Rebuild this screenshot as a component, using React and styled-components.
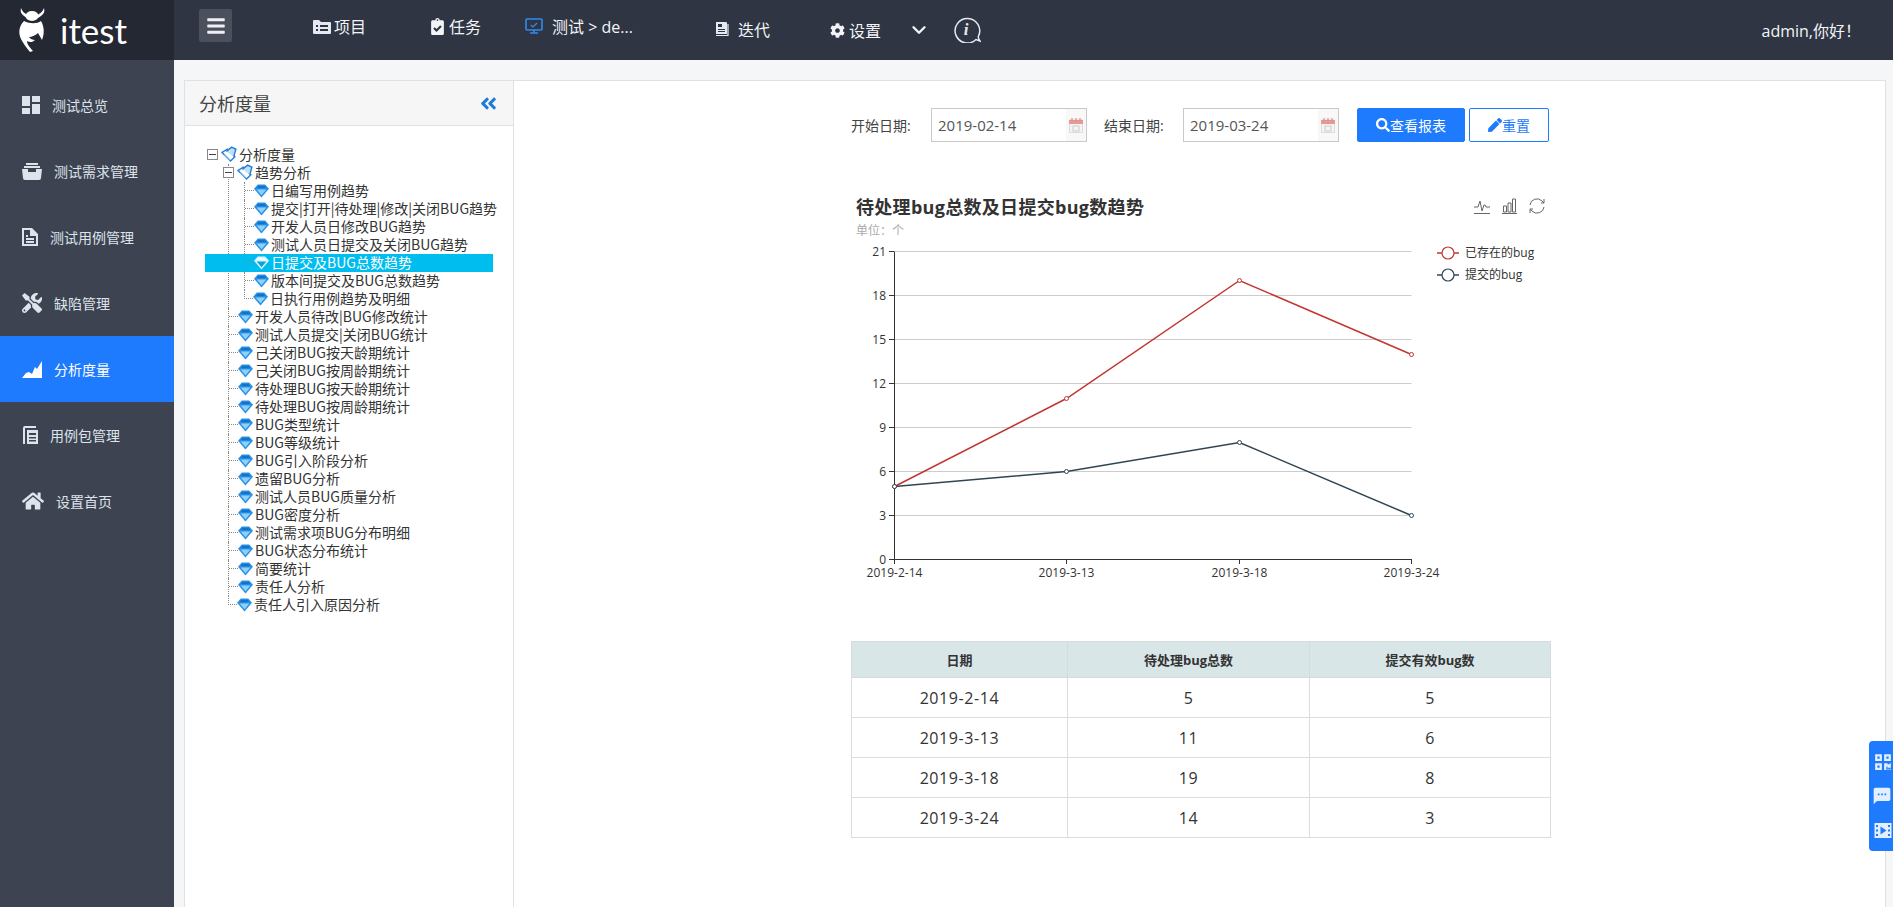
import React from "react";
import styled, { createGlobalStyle } from "styled-components";
import { MdDashboard, MdSms } from "react-icons/md";
import {
  FaTools,
  FaHome,
  FaCog,
  FaSearch,
  FaPen,
  FaBars,
  FaClipboardCheck,
  FaQrcode,
  FaAngleDoubleLeft,
} from "react-icons/fa";
import { FiChevronDown } from "react-icons/fi";

const FONT = `"Open Sans", "Noto Sans CJK SC", sans-serif`;

const GlobalStyle = createGlobalStyle`
  html, body {
    margin: 0;
    height: 100%;
    overflow: hidden;
    background: #f5f6f8;
    font-family: ${FONT};
    color: #333;
  }
  ul { list-style: none; margin: 0; padding: 0; }
`;

const Page = styled.div`
  display: grid;
  grid-template-columns: 174px 1fr;
  grid-template-rows: 60px 1fr;
  width: 1893px;
  height: 907px;
`;

/* top bar */
const LogoCell = styled.div`
  background: #232833;
  display: flex;
  align-items: center;
  padding-left: 18px;
  gap: 14px;
`;
const LogoText = styled.span`
  font-family: "Lato", sans-serif;
  font-size: 35px;
  color: #fff;
  line-height: 1;
`;
const TopBar = styled.header`
  background: #2f3542;
  display: flex;
  align-items: center;
  color: #f2f4f7;
  font-size: 16px;
`;
const MenuToggle = styled.div`
  width: 33px;
  height: 33px;
  margin: 0 81px 9px 25px;
  background: #4b505c;
  border-radius: 2px;
  display: flex;
  align-items: center;
  justify-content: center;
  color: #eef0f3;
  font-size: 20px;
`;
const NavItem = styled.div`
  width: ${(p) => p.$width}px;
  flex-shrink: 0;
  display: flex;
  align-items: center;
  gap: ${(p) => p.$gap || 4}px;
  margin-top: ${(p) => p.$shift || 0}px;
  white-space: nowrap;
  svg { flex-shrink: 0; }
`;
const UserName = styled.div`
  margin-left: auto;
  padding-right: 32px;
  font-size: 16px;
`;

/* side menu */
const SideMenu = styled.nav`
  background: #3d4351;
  padding-top: 12px;
`;
const SideItem = styled.div`
  height: 66px;
  display: flex;
  align-items: center;
  padding-left: 22px;
  font-size: 14px;
  color: ${(p) => (p.$active ? "#fff" : "#dde4ec")};
  background: ${(p) => (p.$active ? "#1f7bfd" : "transparent")};
`;
const SideIcon = styled.span`
  width: ${(p) => p.$labelAt - 22}px;
  display: flex;
  align-items: center;
  color: ${(p) => (p.$active ? "#fff" : "#dde4ec")};
`;

/* main area */
const Main = styled.main`
  display: flex;
  padding: 20px 7px 0 10px;
  min-height: 0;
`;
const TreePanel = styled.section`
  width: 330px;
  flex-shrink: 0;
  background: #fff;
  border: 1px solid #e0e1e3;
  border-bottom: 0;
  box-sizing: border-box;
`;
const TreeHead = styled.div`
  height: 45px;
  box-sizing: border-box;
  background: #f6f6f6;
  border-bottom: 1px solid #e0e1e3;
  display: flex;
  align-items: center;
  justify-content: space-between;
  padding: 0 15px 0 14px;
  font-size: 18px;
  color: #444;
  svg { color: #1f7bd8; font-size: 19px; }
`;
const TreeBody = styled.div`
  padding: 20px 0 0 21px;
  font-family: "Noto Sans CJK SC", sans-serif;
  font-size: 14px;
  line-height: 18px;
  color: #333;
`;
const TreeRow = styled.div`
  display: flex;
  align-items: flex-start;
  height: 18px;
  white-space: nowrap;
  position: relative;
  margin-left: ${(p) => (p.$selected ? "-40px" : "0")};
  padding-left: ${(p) => (p.$selected ? "40px" : "0")};
  width: ${(p) => (p.$selected ? "248px" : "auto")};
  background: ${(p) => (p.$selected ? "#00bdf0" : "transparent")};
  color: ${(p) => (p.$selected ? "#fff" : "inherit")};
`;
const Branch = styled.ul`
  margin-left: ${(p) => p.$indent}px;
`;
const Node = styled.li`
  border-left: 1px dotted #888;
  &:last-child { border-left-color: transparent; }
`;
const Connector = styled.span`
  flex-shrink: 0;
  width: 9px;
  height: 9px;
  box-sizing: border-box;
  border-bottom: 1px dotted #888;
  border-left: ${(p) => (p.$last ? "1px dotted #888" : "0")};
  margin-left: ${(p) => (p.$last ? "-1px" : "0")};
`;
const Switch = styled.span`
  flex-shrink: 0;
  width: 9px;
  height: 9px;
  margin: 3px 4px 0 ${(p) => p.$offset}px;
  border: 1px solid #888;
  background: #fff;
  position: relative;
  &::after {
    content: "";
    position: absolute;
    left: 1px;
    right: 1px;
    top: 4px;
    height: 1px;
    background: #444;
  }
`;
const NodeLabel = styled.span`
  margin-left: ${(p) => (p.$folder ? 1 : 3)}px;
  margin-top: -1px;
`;

/* report */
const ReportPanel = styled.section`
  flex: 1;
  background: #fff;
  border: 1px solid #e0e1e3;
  border-width: 1px 1px 0 0;
  padding-left: 337px;
`;
const ReportColumn = styled.div`
  width: 700px;
`;
const FilterRow = styled.div`
  display: flex;
  align-items: center;
  height: 34px;
  margin-top: 27px;
  font-size: 14px;
`;
const FilterLabel = styled.label`
  width: ${(p) => p.$width}px;
  flex-shrink: 0;
  color: #444;
`;
const DateBox = styled.div`
  width: 156px;
  height: 34px;
  box-sizing: border-box;
  border: 1px solid #c9c9c9;
  margin-right: ${(p) => p.$after}px;
  display: flex;
  align-items: center;
  justify-content: space-between;
  padding-left: 6px;
  color: #555;
  font-size: 15px;
`;
const CalendarSlot = styled.span`
  width: 20px;
  height: 100%;
  background: #f8f8f8;
  display: flex;
  align-items: center;
  justify-content: center;
`;
const Button = styled.button`
  height: 34px;
  width: ${(p) => p.$width}px;
  margin-right: ${(p) => p.$after || 0}px;
  box-sizing: border-box;
  font: 14px ${FONT};
  border-radius: 2px;
  border: 1px solid #1f7bfd;
  background: ${(p) => (p.$primary ? "#1f7bfd" : "#fff")};
  color: ${(p) => (p.$primary ? "#fff" : "#1f7bfd")};
  display: flex;
  align-items: center;
  justify-content: center;
  padding: 0;
  svg { font-size: 14px; }
`;
const ChartHead = styled.div`
  display: flex;
  align-items: center;
  justify-content: space-between;
  height: 26px;
  margin-top: 50px;
  padding: 1px 5px 0 5px;
  box-sizing: border-box;
`;
const ChartTitle = styled.h3`
  margin: 0;
  font-size: 18px;
  font-weight: 700;
  letter-spacing: 0.3px;
  color: #333;
`;
const Toolbox = styled.div`
  display: flex;
  gap: 11px;
  align-items: center;
`;
const UnitText = styled.div`
  padding-left: 5px;
  margin-top: 4px;
  height: 17px;
  font-size: 12px;
  line-height: 18px;
  color: #aaa;
`;
const ChartSvg = styled.svg`
  display: block;
  text {
    font-family: ${FONT};
    font-size: 12px;
    fill: #333;
  }
`;
const DataTable = styled.table`
  width: 699px;
  table-layout: fixed;
  border-collapse: collapse;
  margin-top: 47px;
  text-align: center;
  th {
    height: 35px;
    padding: 0;
    background: #d9e6e8;
    font-size: 13px;
    font-weight: 700;
    color: #333;
    border: 1px solid #d5dcdd;
  }
  td {
    height: 39px;
    padding: 0;
    font-size: 16px;
    letter-spacing: 0.6px;
    color: #333;
    border: 1px solid #ddd;
  }
`;
const SideDock = styled.aside`
  position: fixed;
  left: 1869px;
  top: 741px;
  width: 24px;
  height: 110px;
  background: #1f7bfd;
  border-radius: 4px 0 0 4px;
  display: flex;
  flex-direction: column;
  align-items: flex-end;
  justify-content: space-around;
  color: #e3eeff;
  padding: 4px 1px 4px 0;
  box-sizing: border-box;
`;

/* drawn icons */
const BugLogo = () => (
  <svg width="28" height="46" viewBox="0 0 28 46" fill="#fff">
    <path d="M3 1c-1 3 0 6 3 8l3 2 2-2-3-2C6 6 4 4 3 1zM26 1c1 3 0 6-3 8l-3 2-2-2 3-2c2-1 4-3 5-6z" />
    <ellipse cx="14" cy="9" rx="6.5" ry="5" />
    <path d="M6 14c-5 5-6 12-3 18 2 4 5 8 9 13l3-1c-3-3-6-7-6-10 3 2 6 1 8-1-2 0-5-1-6-3 3 0 7-2 9-4l4 7c2-5 3-12-1-19-4 3-11 3-17 0z" />
  </svg>
);
const ProjectIcon = () => (
  <svg width="18" height="15" viewBox="0 0 18 15">
    <path d="M0 2a1 1 0 0 1 1-1h5l2 2h9a1 1 0 0 1 1 1v10a1 1 0 0 1-1 1H1a1 1 0 0 1-1-1z" fill="#e6eaf0" />
    <path d="M3 6h2v2H3zM7 6h8v2H7zM3 10h2v2H3zM7 10h8v2H7z" fill="#2f3542" />
  </svg>
);
const MonitorIcon = () => (
  <svg width="18" height="16" viewBox="0 0 18 16" fill="none">
    <rect x="1" y="1" width="16" height="11" rx="1" stroke="#2f8cf0" strokeWidth="1.6" />
    <path d="M6 7l2 2 4-4" stroke="#2f8cf0" strokeWidth="1.2" />
    <path d="M5 15h8M9 12v3" stroke="#2f8cf0" strokeWidth="1.6" />
  </svg>
);
const BookIcon = () => (
  <svg width="15" height="16" viewBox="0 0 15 16">
    <path d="M1 1h10a1 1 0 0 1 1 1v11H1z" fill="#e6eaf0" />
    <path d="M3 3h4v3H3zM3 8h7v1H3zM3 10h7v1H3z" fill="#2f3542" />
    <path d="M1 14.5h12V3" stroke="#e6eaf0" strokeWidth="1.2" fill="none" />
  </svg>
);
const InfoBubble = () => (
  <svg width="28" height="27" viewBox="0 0 28 27" fill="none">
    <path d="M23 23.5A12.3 12.3 0 1 1 25.5 20c-.5 1.500-.2 3 1.500 5z" stroke="#e6eaf0" strokeWidth="1.500" />
    <text x="13" y="19" textAnchor="middle" fontFamily="Liberation Serif" fontStyle="italic" fontWeight="700" fontSize="17" fill="#e6eaf0">i</text>
  </svg>
);
const BoxIcon = () => (
  <svg width="20" height="17" viewBox="0 0 20 17" fill="#dde4ec">
    <path d="M4 0h12v2H4zM2 3h16v2H2z" />
    <path d="M0 6h6v3h8V6h6l-1 9a2 2 0 0 1-2 2H3a2 2 0 0 1-2-2z" />
  </svg>
);
const DocIcon = () => (
  <svg width="16" height="18" viewBox="0 0 16 18" fill="#dde4ec">
    <path d="M0 0h10l6 6v12H0zM2 2v14h12V8H8V2zM4 7h2v2H4zM4 10h8v2H4zM4 13h8v2H4z" fillRule="evenodd" />
  </svg>
);
const PeakIcon = () => (
  <svg width="20" height="17" viewBox="0 0 20 17" fill="#fff">
    <path d="M0 17l4-5 3-1 3 2 3-7 2 2 5-8v17z" />
  </svg>
);
const PackIcon = () => (
  <svg width="16" height="18" viewBox="0 0 16 18" fill="#dde4ec">
    <path d="M1 2a2 2 0 0 1 2-2h11v2H3v16H1z" />
    <path d="M5 4h11v14H5zM7 7v2h7V7zM7 11v1.500h7V11zM7 14v1.500h7V14z" fillRule="evenodd" />
  </svg>
);
const CalendarIcon = () => (
  <svg width="14" height="15" viewBox="0 0 14 15">
    <rect x="0.5" y="2" width="13" height="12.500" fill="#f4f4f4" stroke="#ddd" />
    <rect x="0" y="2" width="14" height="4" fill="#e59a97" />
    <path d="M3 0v3M7 0v3M11 0v3" stroke="#d77c79" />
    <rect x="4" y="8" width="6" height="5" fill="none" stroke="#ccc" />
  </svg>
);
const Gem = ({ light }) => (
  <svg width="15" height="14" viewBox="0 0 14 13" style={{ flexShrink: 0, marginTop: 2, marginRight: -1 }}>
    <path d="M3.500 0.500h7l3.500 4-7 8-7-8z" fill={light ? "#d9f3fd" : "#2a93e8"} />
    <path d="M2.500 5h9l-4.500 5.500z" fill={light ? "#00a7dc" : "#8fd0f6"} />
    <path d="M4 1.500h6l1.500 2.500h-9z" fill={light ? "#f4fbff" : "#1273c9"} />
  </svg>
);
const OpenBook = () => (
  <svg width="17" height="16" viewBox="0 0 16 15" style={{ flexShrink: 0, marginLeft: -1 }}>
    <path d="M1 6l5-3 7 7-4 4z" fill="#fff" stroke="#2a7fd8" strokeWidth="1.400" />
    <path d="M5 5l5-4 4 2-2 7" fill="#bfe2fa" stroke="#2a7fd8" strokeWidth="1.400" />
    <path d="M3 8l5 5" stroke="#7fc0f2" />
  </svg>
);
const LineTool = () => (
  <svg width="18" height="18" viewBox="0 0 18 18" fill="none" stroke="#666">
    <path d="M1 10h4l2-6 2 10 2-6h1l1 2h4" />
    <path d="M1 16.500h16" />
  </svg>
);
const BarTool = () => (
  <svg width="15" height="18" viewBox="0 0 15 18" fill="none" stroke="#666">
    <path d="M1.500 9h3v6h-3zM6 6h3v9H6zM10.500 2h3v13h-3zM0 16.500h15" />
  </svg>
);
const RefreshTool = () => (
  <svg width="18" height="18" viewBox="0 0 18 18" fill="none" stroke="#666">
    <path d="M2 8a7 7 0 0 1 12-4l2 2M16 10a7 7 0 0 1-12 4l-2-2" />
    <path d="M16 2v4h-3M2 16v-4h3" />
  </svg>
);
const FilmIcon = () => (
  <svg width="18" height="17" viewBox="0 0 17 17" fill="#e3eeff">
    <path d="M0 1h17v15H0zM1.500 3v2h2V3zM1.500 7.500v2h2v-2zM1.500 12v2h2v-2zM13.500 3v2h2V3zM13.500 7.500v2h2v-2zM13.500 12v2h2v-2zM6 4.500v8l6-4z" fillRule="evenodd" />
  </svg>
);

const SIDE_ITEMS = [
  { label: "测试总览", icon: <MdDashboard size={24} style={{ marginLeft: -3 }} />, labelAt: 52 },
  { label: "测试需求管理", icon: <BoxIcon />, labelAt: 54 },
  { label: "测试用例管理", icon: <DocIcon />, labelAt: 50 },
  { label: "缺陷管理", icon: <FaTools size={20} />, labelAt: 54 },
  { label: "分析度量", icon: <PeakIcon />, labelAt: 54, active: true },
  { label: "用例包管理", icon: <PackIcon />, labelAt: 50 },
  { label: "设置首页", icon: <FaHome size={22} />, labelAt: 56 },
];

const TREND_NODES = [
  "日编写用例趋势",
  "提交|打开|待处理|修改|关闭BUG趋势",
  "开发人员日修改BUG趋势",
  "测试人员日提交及关闭BUG趋势",
  "日提交及BUG总数趋势",
  "版本间提交及BUG总数趋势",
  "日执行用例趋势及明细",
];
const SELECTED_NODE = "日提交及BUG总数趋势";

const ANALYSIS_NODES = [
  "开发人员待改|BUG修改统计",
  "测试人员提交|关闭BUG统计",
  "己关闭BUG按天龄期统计",
  "己关闭BUG按周龄期统计",
  "待处理BUG按天龄期统计",
  "待处理BUG按周龄期统计",
  "BUG类型统计",
  "BUG等级统计",
  "BUG引入阶段分析",
  "遗留BUG分析",
  "测试人员BUG质量分析",
  "BUG密度分析",
  "测试需求项BUG分布明细",
  "BUG状态分布统计",
  "简要统计",
  "责任人分析",
  "责任人引入原因分析",
];

const ROWS = [
  { date: "2019-2-14", open: 5, added: 5 },
  { date: "2019-3-13", open: 11, added: 6 },
  { date: "2019-3-18", open: 19, added: 8 },
  { date: "2019-3-24", open: 14, added: 3 },
];

// chart is drawn in svg coords, origin at the left edge of the column
const X0 = 43;
const X_STEP = 172.4;
const Y0 = 320;
const UNIT = 14.667;
const xAt = (i) => Math.round(X0 + i * X_STEP) + 0.5;
const yAt = (v) => Math.round(Y0 - v * UNIT) + 0.5;

const Series = ({ field, color }) => (
  <g>
    <polyline
      points={ROWS.map((r, i) => `${xAt(i)},${yAt(r[field])}`).join(" ")}
      fill="none"
      stroke={color}
      strokeWidth="1.500"
    />
    {ROWS.map((r, i) => (
      <circle key={r.date} cx={xAt(i)} cy={yAt(r[field])} r="2" fill="#fff" stroke={color} />
    ))}
  </g>
);

const LegendEntry = ({ y, color, label }) => (
  <g>
    <path d={`M586 ${y}h22`} stroke={color} strokeWidth="1.500" />
    <circle cx="597" cy={y} r="6" fill="#fff" stroke={color} strokeWidth="1.200" />
    <text x="614" y={y + 4}>{label}</text>
  </g>
);

const TrendChart = () => (
  <ChartSvg width="700" height="355" viewBox="0 0 700 355">
    {[3, 6, 9, 12, 15, 18, 21].map((v) => (
      <line key={v} x1={xAt(0)} x2={xAt(3)} y1={yAt(v)} y2={yAt(v)} stroke="#ccc" />
    ))}
    <line x1={xAt(0)} x2={xAt(0)} y1={yAt(21)} y2={yAt(0)} stroke="#333" />
    <line x1={xAt(0)} x2={xAt(3)} y1={yAt(0)} y2={yAt(0)} stroke="#333" />
    {[0, 3, 6, 9, 12, 15, 18, 21].map((v) => (
      <g key={v}>
        <line x1={X0 - 5} x2={X0} y1={yAt(v)} y2={yAt(v)} stroke="#333" />
        <text x={X0 - 8} y={yAt(v) + 4} textAnchor="end">{v}</text>
      </g>
    ))}
    {ROWS.map((r, i) => (
      <g key={r.date}>
        <line x1={xAt(i)} x2={xAt(i)} y1={Y0} y2={Y0 + 5} stroke="#333" />
        <text x={xAt(i)} y={Y0 + 18} textAnchor="middle">{r.date}</text>
      </g>
    ))}
    <Series field="open" color="#c23531" />
    <Series field="added" color="#2f4554" />
    <LegendEntry y={14} color="#c23531" label="已存在的bug" />
    <LegendEntry y={36} color="#2f4554" label="提交的bug" />
  </ChartSvg>
);

export default function App() {
  return (
    <Page>
      <GlobalStyle />
      <LogoCell>
        <BugLogo />
        <LogoText>itest</LogoText>
      </LogoCell>
      <TopBar>
        <MenuToggle><FaBars /></MenuToggle>
        <NavItem $width={116} $gap={3} $shift={-8}><ProjectIcon />项目</NavItem>
        <NavItem $width={96} $gap={3} $shift={-8}><FaClipboardCheck size={17} />任务</NavItem>
        <NavItem $width={190} $gap={9} $shift={-8}><MonitorIcon />测试 &gt; de...</NavItem>
        <NavItem $width={115} $gap={8} $shift={-2}><BookIcon />迭代</NavItem>
        <NavItem $width={78} $gap={4}><FaCog size={15} />设置</NavItem>
        <NavItem $width={45}><FiChevronDown size={22} strokeWidth={2.6} /></NavItem>
        <NavItem $width={40} $shift={-2}><InfoBubble /></NavItem>
        <UserName>admin,你好！</UserName>
      </TopBar>
      <SideMenu>
        {SIDE_ITEMS.map((item) => (
          <SideItem key={item.label} $active={item.active}>
            <SideIcon $labelAt={item.labelAt} $active={item.active}>{item.icon}</SideIcon>
            {item.label}
          </SideItem>
        ))}
      </SideMenu>
      <Main>
        <TreePanel>
          <TreeHead>
            分析度量
            <FaAngleDoubleLeft />
          </TreeHead>
          <TreeBody>
            <TreeRow>
              <Switch $offset={1} />
              <OpenBook />
              <NodeLabel $folder>分析度量</NodeLabel>
            </TreeRow>
            <Branch $indent={22}>
              <Node>
                <TreeRow>
                  <Switch $offset={-6} />
                  <OpenBook />
                  <NodeLabel $folder>趋势分析</NodeLabel>
                </TreeRow>
                <Branch $indent={15}>
                  {TREND_NODES.map((name, i) => (
                    <Node key={name}>
                      <TreeRow $selected={name === SELECTED_NODE}>
                        <Connector $last={i === TREND_NODES.length - 1} />
                        <Gem light={name === SELECTED_NODE} />
                        <NodeLabel>{name}</NodeLabel>
                      </TreeRow>
                    </Node>
                  ))}
                </Branch>
              </Node>
              {ANALYSIS_NODES.map((name, i) => (
                <Node key={name}>
                  <TreeRow>
                    <Connector $last={i === ANALYSIS_NODES.length - 1} />
                    <Gem />
                    <NodeLabel>{name}</NodeLabel>
                  </TreeRow>
                </Node>
              ))}
            </Branch>
          </TreeBody>
        </TreePanel>
        <ReportPanel>
          <ReportColumn>
            <FilterRow>
              <FilterLabel $width={80}>开始日期:</FilterLabel>
              <DateBox $after={17}>
                2019-02-14
                <CalendarSlot><CalendarIcon /></CalendarSlot>
              </DateBox>
              <FilterLabel $width={79}>结束日期:</FilterLabel>
              <DateBox $after={18}>
                2019-03-24
                <CalendarSlot><CalendarIcon /></CalendarSlot>
              </DateBox>
              <Button $primary $width={108} $after={4}><FaSearch />查看报表</Button>
              <Button $width={80}><FaPen />重置</Button>
            </FilterRow>
            <ChartHead>
              <ChartTitle>待处理bug总数及日提交bug数趋势</ChartTitle>
              <Toolbox>
                <LineTool />
                <BarTool />
                <RefreshTool />
              </Toolbox>
            </ChartHead>
            <UnitText>单位：个</UnitText>
            <TrendChart />
            <DataTable>
              <colgroup>
                <col style={{ width: 216 }} />
                <col style={{ width: 242 }} />
                <col style={{ width: 241 }} />
              </colgroup>
              <thead>
                <tr>
                  <th>日期</th>
                  <th>待处理bug总数</th>
                  <th>提交有效bug数</th>
                </tr>
              </thead>
              <tbody>
                {ROWS.map((r) => (
                  <tr key={r.date}>
                    <td>{r.date}</td>
                    <td>{r.open}</td>
                    <td>{r.added}</td>
                  </tr>
                ))}
              </tbody>
            </DataTable>
          </ReportColumn>
        </ReportPanel>
      </Main>
      <SideDock>
        <FaQrcode size={18} />
        <MdSms size={20} />
        <FilmIcon />
      </SideDock>
    </Page>
  );
}
